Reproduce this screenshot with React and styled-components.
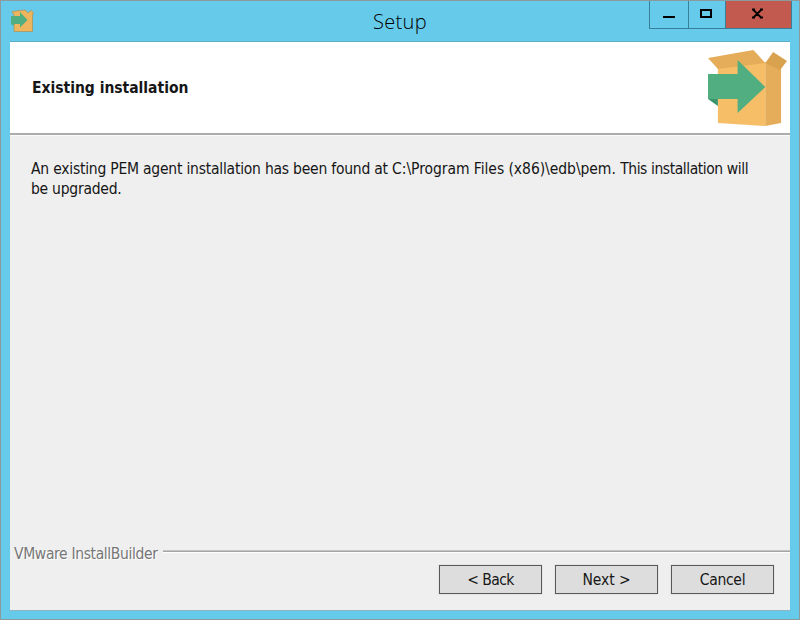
import React from "react";
import styled, { createGlobalStyle } from "styled-components";

const GlobalStyle = createGlobalStyle`
  * { box-sizing: border-box; }
  body { margin: 0; overflow: hidden; }
`;

const Window = styled.main`
  width: 800px;
  height: 620px;
  display: flex;
  flex-direction: column;
  padding: 0 9px 8px;
  background: #66caea;
  border: 1px solid #8c9a9e;
  font-family: "DejaVu Sans Condensed", "DejaVu Sans", sans-serif;
  font-stretch: condensed;
  font-size: 15.5px;
  color: #161616;
`;

const TitleBar = styled.header`
  height: 41px;
  flex: none;
  display: grid;
  grid-template-columns: 142px 1fr 142px;
  border-bottom: 1px solid #5faecb;
`;

const TitleIcon = styled.div`
  padding: 8px 0 0 1px;
  svg { display: block; }
`;

const Title = styled.h1`
  margin: 0;
  padding-top: 6px;
  text-align: center;
  font-family: "Open Sans", "Noto Sans", sans-serif;
  font-size: 20px;
  line-height: 30px;
  font-weight: 300;
  font-stretch: normal;
  letter-spacing: 0.3px;
  color: #000;
`;

const Controls = styled.div`
  width: 143px;
  height: 28px;
  margin-left: 1px;
  display: flex;
  border: 1px solid #397f98;
  border-top: 0;
`;

const Control = styled.button`
  width: ${(p) => p.$width}px;
  height: 27px;
  flex: none;
  padding: 0;
  border: 0;
  border-right: ${(p) => (p.$close ? 0 : "1px solid #397f98")};
  background: ${(p) => (p.$close ? "#c35a50" : "transparent")};
  svg { display: block; }
`;

const Client = styled.div`
  flex: 1;
  min-height: 0;
  display: flex;
  flex-direction: column;
  background: #efefef;
  border-bottom: 1px solid #8eb4c2;
`;

const Banner = styled.section`
  height: 93px;
  flex: none;
  display: flex;
  justify-content: space-between;
  background: #fff;
  border-bottom: 2px solid #acacac;
`;

const Heading = styled.h2`
  margin: 0;
  padding: 35px 0 0 22px;
  font-size: 15.5px;
  line-height: 22px;
  font-weight: 700;
  letter-spacing: -0.02px;
`;

const BannerArt = styled.div`
  padding: 7px 3px 0 0;
  svg { display: block; }
`;

const Message = styled.section`
  flex: 1;
  padding: 23px 21px 0;
  border-top: 1px solid #fbfbfb;
  line-height: 20px;
`;

const Line = styled.p`
  margin: 0;
  white-space: pre;
`;

const Phrase = styled.span`
  letter-spacing: ${(p) => p.$tracking}px;
`;

const Divider = styled.div`
  height: 20px;
  flex: none;
  display: flex;
  align-items: flex-start;
  gap: 5px;
  padding-left: 4px;
`;

const Brand = styled.span`
  color: #777;
  text-shadow: 1px 1px 0 #fff;
  line-height: 22px;
  letter-spacing: -0.36px;
`;

const Rule = styled.div`
  flex: 1;
  height: 3px;
  margin-top: 7px;
  background: #a5a5a5;
  border-top: 1px solid #c4c4c4;
  border-bottom: 1px solid #fff;
`;

const Footer = styled.footer`
  height: 47px;
  flex: none;
  display: flex;
  justify-content: flex-end;
  gap: 13px;
  padding: 2px 16px 0 0;
`;

const Button = styled.button`
  width: 103px;
  height: 29px;
  padding: 1px 0 0;
  border: 1px solid #595959;
  background: #dddddd;
  box-shadow: 0 0 0 1px #e5e5e5;
  font: inherit;
  font-stretch: condensed;
  letter-spacing: ${(p) => p.$tracking}px;
  color: #161616;
`;

const BoxDrawing = ({ width, height }) => (
  <svg width={width} height={height} viewBox="0 0 80 78" preserveAspectRatio="none">
    <path d="M10 17 58 13V77L10 74Z" fill="#f6be67" />
    <path d="M58 13 74 20V74L58 77Z" fill="#e5ad59" />
    <path d="M0 9 46 1 58 14 10 20Z" fill="#e5ad59" />
    <path d="M58 14 66 3 80 12 73 21Z" fill="#d8a24e" />
    <path d="M0 49H10V57L0 50Z" fill="#39946c" />
    <path d="M0 25H30V11L58 38 30 64V50H0Z" fill="#50ae81" />
  </svg>
);

const SmallBox = () => (
  <svg width="24" height="24" viewBox="0 0 24 24">
    <path d="M1 2.5 14 1 17 4 20 1.5 22.5 3.5 21.5 6V22.5H3V6Z" fill="#edb55e" stroke="#a8965e" strokeWidth="0.8" />
    <path d="M0 7H9V3L16.5 11 9 18.5V15H3V17L0 15Z" fill="#50ae81" />
  </svg>
);

export default function App() {
  return (
    <>
      <GlobalStyle />
      <Window>
        <TitleBar>
          <TitleIcon><SmallBox /></TitleIcon>
          <Title>Setup</Title>
          <Controls>
            <Control $width={39} aria-label="Minimize">
              <svg width="38" height="27"><path d="M13 15H25V17H13Z" fill="#000" /></svg>
            </Control>
            <Control $width={37} aria-label="Maximize">
              <svg width="36" height="27"><path d="M11 8H23V17H11ZM13 10V15H21V10Z" fill="#000" fillRule="evenodd" /></svg>
            </Control>
            <Control $width={65} $close aria-label="Close">
              <svg width="65" height="27"><path d="m27 8.5 8.5 8.5m0-8.5-8.5 8.5M26 8.5h3m5 0h3M26 16.5h3m5 0h3" stroke="#000" strokeWidth="1.8" fill="none" /></svg>
            </Control>
          </Controls>
        </TitleBar>
        <Client>
          <Banner>
            <Heading>Existing installation</Heading>
            <BannerArt><BoxDrawing width={79} height={78} /></BannerArt>
          </Banner>
          <Message>
            <Line>
              <Phrase $tracking={-0.225}>An existing PEM agent installation has been found at </Phrase>
              <Phrase $tracking={-0.05}>C:\Program Files (x86)\edb\pem. </Phrase>
              <Phrase $tracking={-0.43}>This installation will</Phrase>
            </Line>
            <Line><Phrase $tracking={-0.25}>be upgraded.</Phrase></Line>
          </Message>
          <Divider><Brand>VMware InstallBuilder</Brand><Rule /></Divider>
          <Footer>
            <Button $tracking={-0.55}>&lt; Back</Button>
            <Button $tracking={-0.1}>Next &gt;</Button>
            <Button $tracking={-0.3}>Cancel</Button>
          </Footer>
        </Client>
      </Window>
    </>
  );
}
